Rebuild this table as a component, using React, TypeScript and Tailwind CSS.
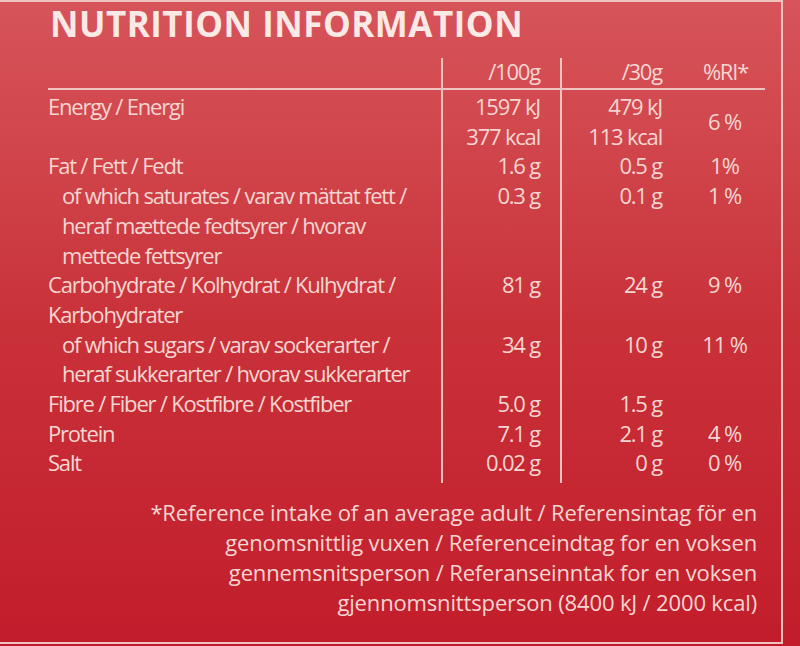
import React from "react";

type Row = {
  label: string[];
  sub?: boolean;
  v100: string[];
  v30: string[];
  ri?: string;
  riCenter?: boolean;
};

const rows: Row[] = [
  { label: ["Energy / Energi"], v100: ["1597 kJ", "377 kcal"], v30: ["479 kJ", "113 kcal"], ri: "6 %", riCenter: true },
  { label: ["Fat / Fett / Fedt"], v100: ["1.6 g"], v30: ["0.5 g"], ri: "1%" },
  {
    label: ["of which saturates / varav mättat fett /", "heraf mættede fedtsyrer / hvorav", "mettede fettsyrer"],
    sub: true,
    v100: ["0.3 g"],
    v30: ["0.1 g"],
    ri: "1 %",
  },
  { label: ["Carbohydrate / Kolhydrat / Kulhydrat /", "Karbohydrater"], v100: ["81 g"], v30: ["24 g"], ri: "9 %" },
  {
    label: ["of which sugars / varav sockerarter /", "heraf sukkerarter / hvorav sukkerarter"],
    sub: true,
    v100: ["34 g"],
    v30: ["10 g"],
    ri: "11 %",
  },
  { label: ["Fibre / Fiber / Kostfibre / Kostfiber"], v100: ["5.0 g"], v30: ["1.5 g"] },
  { label: ["Protein"], v100: ["7.1 g"], v30: ["2.1 g"], ri: "4 %" },
  { label: ["Salt"], v100: ["0.02 g"], v30: ["0 g"], ri: "0 %" },
];

const footnote = [
  "*Reference intake of an average adult / Referensintag för en",
  "genomsnittlig vuxen / Referenceindtag for en voksen",
  "gennemsnitsperson / Referanseinntak for en voksen",
  "gjennomsnittsperson (8400 kJ / 2000 kcal)",
];

const grid = "grid grid-cols-[393px_119px_120px_85px]";
const line = "border-[#efc4c0]";

export default function App() {
  return (
    <div
      className="w-[800px] h-[646px] overflow-hidden bg-linear-to-b from-[#d6545a] via-[#c93139] to-[#c21c2b] text-[#f5d6d2]"
      style={{ fontFamily: '"Open Sans", "Noto Sans", sans-serif' }}
    >
      <div className={`w-[783px] h-[644px] border-t-2 border-r-2 border-b-2 ${line} pl-[48px]`}>
        <h1 className="mt-[5px] pl-[2px] text-[35px] leading-[34px] font-bold tracking-[0.5px] text-[#fbe9e6]">
          NUTRITION INFORMATION
        </h1>

        <div className="mt-[17px] w-[717px] text-[22px] tracking-[-1.2px]">
          {/* header */}
          <div className={`${grid} h-[32px] border-b-2 ${line}`}>
            <div />
            <div className={`border-l-2 ${line} pt-[3px] pr-[20px] text-right leading-[20px]`}>/100g</div>
            <div className={`border-l-2 ${line} pt-[3px] pr-[18px] text-right leading-[20px]`}>/30g</div>
            <div className="pt-[3px] pl-[6px] text-center leading-[20px]">%RI*</div>
          </div>

          {/* body */}
          <div className={`${grid} h-[2px]`}>
            <div />
            <div className={`border-l-2 ${line}`} />
            <div className={`border-l-2 ${line}`} />
            <div />
          </div>
          {rows.map((r, i) => (
            <div key={i} className={`${grid} leading-[29.7px]`}>
              <div className={r.sub ? "pl-[14px]" : ""}>
                {r.label.map((l) => (
                  <div key={l}>{l}</div>
                ))}
              </div>
              <div className={`border-l-2 ${line} pr-[20px] text-right`}>
                {r.v100.map((v) => (
                  <div key={v}>{v}</div>
                ))}
              </div>
              <div className={`border-l-2 ${line} pr-[18px] text-right`}>
                {r.v30.map((v) => (
                  <div key={v}>{v}</div>
                ))}
              </div>
              <div className={`flex justify-center pl-[4px] ${r.riCenter ? "items-center" : "items-start"}`}>
                {r.ri}
              </div>
            </div>
          ))}
          <div className={`${grid} h-[5px]`}>
            <div />
            <div className={`border-l-2 ${line}`} />
            <div className={`border-l-2 ${line}`} />
            <div />
          </div>
        </div>

        <div className="mt-[14px] w-[709px] text-right text-[22px] leading-[30px] tracking-[-0.15px]">
          {footnote.map((l) => (
            <div key={l}>{l}</div>
          ))}
        </div>
      </div>
    </div>
  );
}
